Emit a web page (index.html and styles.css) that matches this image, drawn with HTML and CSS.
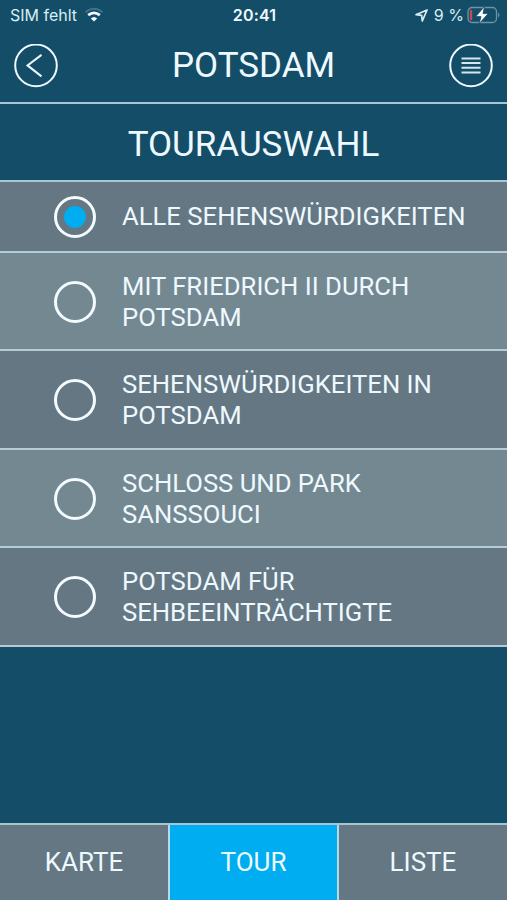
FILE: index.html
```html
<!DOCTYPE html>
<html lang="de">
<head>
<meta charset="utf-8">
<title>Potsdam</title>
<link rel="stylesheet" href="styles.css">
</head>
<body>
<div class="app">
  <div class="status">
    <div class="status-left"><span class="carrier">SIM fehlt</span>
      <svg class="wifi" width="20" height="16" viewBox="0 0 20 16" fill="none"><path d="M1.5 5.2Q10-1.8 18.500 5.200" stroke="#3f7188" stroke-width="2"/><path d="M4.200 8.200Q10 3.500 15.800 8.200" stroke="#f0faff" stroke-width="2.800"/><path d="M6.800 11.500Q10 8.500 13.200 11.500L10 14.500Z" fill="#f0faff"/></svg>
    </div>
    <span class="clock">20:41</span>
    <div class="status-right">
      <svg class="locate" width="13" height="13" viewBox="0 0 13 13" fill="none" stroke="#d8edf5" stroke-width="1.700" stroke-linejoin="round"><path d="M1 5.700L12 1L7.300 12L6.600 6.400Z"/></svg>
      <span class="percent">9 %</span>
      <svg class="battery" width="33" height="18" viewBox="0 0 33 18"><rect x="1" y="1.500" width="28.500" height="15" rx="4" fill="none" stroke="#6f94a4" stroke-width="1.300"/><path d="M31 6.500q3 2.500 0 5z" fill="#6f94a4"/><rect x="2.800" y="3.700" width="2.400" height="10.600" rx="1" fill="#c84a50"/><path d="M17.600.3L8.800 10.600h5.200l-1.900 7.200 9.100-10.200h-5.200z" fill="#fff" stroke="#134d67" stroke-width=".8"/></svg>
    </div>
  </div>
  <header class="header">
    <svg class="round" width="44" height="44" viewBox="0 0.6 44 44" fill="none" stroke="#eef9ff" stroke-width="2"><circle cx="22" cy="22" r="20.800"/><path d="M27.500 11.500L13.500 22L27.500 33"/></svg>
    <h1>POTSDAM</h1>
    <svg class="round" width="44" height="44" viewBox="0 0.6 44 44" fill="none" stroke="#eef9ff" stroke-width="2"><circle cx="22" cy="22" r="20.800"/><path d="M12.500 15h19M12.500 19.700h19M12.500 24.400h19M12.500 29.100h19" stroke="#d4e7ef"/></svg>
  </header>
  <h2>TOURAUSWAHL</h2>
  <ul class="tours">
    <li class="single"><span class="radio checked"></span><span>ALLE SEHENSWÜRDIGKEITEN</span></li>
    <li><span class="radio"></span><span>MIT FRIEDRICH II DURCH<br>POTSDAM</span></li>
    <li><span class="radio"></span><span>SEHENSWÜRDIGKEITEN IN<br>POTSDAM</span></li>
    <li><span class="radio"></span><span>SCHLOSS UND PARK<br>SANSSOUCI</span></li>
    <li><span class="radio"></span><span>POTSDAM FÜR<br>SEHBEEINTRÄCHTIGTE</span></li>
  </ul>
  <nav class="tabs"><span>KARTE</span><span class="active">TOUR</span><span>LISTE</span></nav>
</div>
</body>
</html>
```
FILE: styles.css
```css
* { box-sizing: border-box; }
body { margin: 0; background: #134d67; color: #eef9ff; font-family: Roboto, sans-serif; }
.app { width: 507px; height: 900px; display: flex; flex-direction: column; overflow: hidden; }
.status { height: 30px; flex: none; display: grid; grid-template-columns: 1fr auto 1fr; align-items: center; padding: 0 7px 0 10px; font: 16px/30px Inter, sans-serif; color: #d8edf5; }
.status-left, .status-right { display: flex; align-items: center; }
.status-right { justify-content: flex-end; }
.wifi { margin-left: 7px; }
.clock { margin-right: 1px; font-weight: 600; letter-spacing: 0.200px; color: #eef9ff; }
.percent { margin: 0 3px 0 6px; white-space: nowrap; }
.header { height: 74px; flex: none; display: flex; justify-content: space-between; padding: 14px 14px 0; border-bottom: 2px solid #a7c6d2; }
h1, h2 { margin: 0; font-weight: 400; font-size: 35px; line-height: 44px; text-align: center; }
h2 { height: 78px; flex: none; padding-top: 19px; border-bottom: 2px solid #a7c6d2; }
.tours { list-style: none; margin: 0; padding: 0; }
.tours li { height: 98.400px; display: flex; align-items: center; padding: 2px 0 0 54px; border-bottom: 2px solid #b4ccd6; background: #748892; font-size: 25.660px; line-height: 31px; }
.tours li:nth-child(odd) { background: #647783; }
.tours li:nth-child(3) { padding-top: 1px; }
.tours .single { height: 71px; padding-top: 0; }
.radio { width: 42px; height: 42px; flex: none; margin-right: 26px; border: 3px solid #f4fbff; border-radius: 50%; display: grid; place-items: center; }
.checked::after { content: ""; width: 22px; height: 22px; border-radius: 50%; background: #00adf1; }
.tabs { flex: none; height: 77px; margin-top: auto; display: grid; grid-template-columns: 168px 171px 168px; border-top: 2px solid #a7c6d2; background: #647783; font-size: 26px; line-height: 75px; text-align: center; }
.tabs .active { background: #00adf1; border: solid #b4dbea; border-width: 0 2px; }
```
